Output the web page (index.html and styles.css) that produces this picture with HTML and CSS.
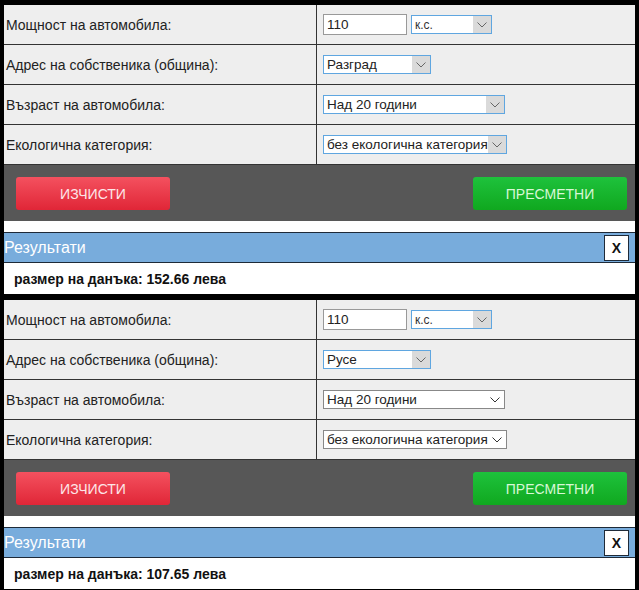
FILE: index.html
```html
<!DOCTYPE html>
<html lang="bg">
<head>
<meta charset="utf-8">
<link rel="stylesheet" href="styles.css">
</head>
<body>
<div class="panel">
  <div class="form">
    <div class="row">
      <div class="lbl">Мощност на автомобила:</div>
      <div class="fld">
        <span class="txt">110</span>
        <span class="sel hot w-unit"><span class="val small">к.с.</span><span class="arr"><svg width="10" height="6" viewBox="0 0 10 6"><path d="M0.5 0.5 L5 5 L9.5 0.5" fill="none" stroke="#666" stroke-width="1"/></svg></span></span>
      </div>
    </div>
    <div class="row">
      <div class="lbl">Адрес на собственика (община):</div>
      <div class="fld">
        <span class="sel hot w-town"><span class="val">Разград</span><span class="arr"><svg width="10" height="6" viewBox="0 0 10 6"><path d="M0.5 0.5 L5 5 L9.5 0.5" fill="none" stroke="#666" stroke-width="1"/></svg></span></span>
      </div>
    </div>
    <div class="row">
      <div class="lbl">Възраст на автомобила:</div>
      <div class="fld">
        <span class="sel hot w-age"><span class="val">Над 20 години</span><span class="arr"><svg width="10" height="6" viewBox="0 0 10 6"><path d="M0.5 0.5 L5 5 L9.5 0.5" fill="none" stroke="#666" stroke-width="1"/></svg></span></span>
      </div>
    </div>
    <div class="row">
      <div class="lbl">Екологична категория:</div>
      <div class="fld">
        <span class="sel hot w-eco"><span class="val">без екологична категория</span><span class="arr"><svg width="10" height="6" viewBox="0 0 10 6"><path d="M0.5 0.5 L5 5 L9.5 0.5" fill="none" stroke="#666" stroke-width="1"/></svg></span></span>
      </div>
    </div>
  </div>
  <div class="bar">
    <span class="btn red">ИЗЧИСТИ</span>
    <span class="btn green">ПРЕСМЕТНИ</span>
  </div>
  <div class="spacer"></div>
  <div class="res-head"><span class="res-title">Результати</span><span class="close">X</span></div>
  <div class="res-body">размер на данъка: 152.66 лева</div>
</div>

<div class="panel">
  <div class="form">
    <div class="row">
      <div class="lbl">Мощност на автомобила:</div>
      <div class="fld">
        <span class="txt">110</span>
        <span class="sel hot w-unit"><span class="val small">к.с.</span><span class="arr"><svg width="10" height="6" viewBox="0 0 10 6"><path d="M0.5 0.5 L5 5 L9.5 0.5" fill="none" stroke="#666" stroke-width="1"/></svg></span></span>
      </div>
    </div>
    <div class="row">
      <div class="lbl">Адрес на собственика (община):</div>
      <div class="fld">
        <span class="sel hot w-town"><span class="val">Русе</span><span class="arr"><svg width="10" height="6" viewBox="0 0 10 6"><path d="M0.5 0.5 L5 5 L9.5 0.5" fill="none" stroke="#666" stroke-width="1"/></svg></span></span>
      </div>
    </div>
    <div class="row">
      <div class="lbl">Възраст на автомобила:</div>
      <div class="fld">
        <span class="sel cold w-age"><span class="val">Над 20 години</span><span class="arr"><svg width="10" height="6" viewBox="0 0 10 6"><path d="M0.5 0.5 L5 5 L9.5 0.5" fill="none" stroke="#333" stroke-width="1"/></svg></span></span>
      </div>
    </div>
    <div class="row">
      <div class="lbl">Екологична категория:</div>
      <div class="fld">
        <span class="sel cold w-eco"><span class="val">без екологична категория</span><span class="arr"><svg width="10" height="6" viewBox="0 0 10 6"><path d="M0.5 0.5 L5 5 L9.5 0.5" fill="none" stroke="#333" stroke-width="1"/></svg></span></span>
      </div>
    </div>
  </div>
  <div class="bar">
    <span class="btn red">ИЗЧИСТИ</span>
    <span class="btn green">ПРЕСМЕТНИ</span>
  </div>
  <div class="spacer"></div>
  <div class="res-head"><span class="res-title">Результати</span><span class="close">X</span></div>
  <div class="res-body">размер на данъка: 107.65 лева</div>
</div>
</body>
</html>
```

FILE: styles.css
```css
html, body {
  margin: 0;
  padding: 0;
  background: #000;
}
body {
  padding: 5px 4px 0 4px;
  font-family: "Liberation Sans", Arial, sans-serif;
  font-size: 14px;
  color: #222;
  display: flex;
  flex-direction: column;
  gap: 6px;
}
.panel {
  width: 631px;
  display: flex;
  flex-direction: column;
}
.form {
  background: #eeeeee;
}
.row {
  display: grid;
  grid-template-columns: 313px 1fr;
  height: 39px;
  border-bottom: 1px solid #333;
}
.lbl {
  display: flex;
  align-items: center;
  padding-left: 2px;
  border-right: 1px solid #333;
}
.fld {
  display: flex;
  align-items: center;
  gap: 4px;
  padding-left: 6px;
}
.txt {
  box-sizing: border-box;
  width: 84px;
  height: 21px;
  background: #fff;
  border: 1px solid #999;
  display: flex;
  align-items: center;
  padding-left: 3px;
  font-size: 13.5px;
}
.sel {
  box-sizing: border-box;
  height: 19px;
  background: #fff;
  display: flex;
  align-items: stretch;
  font-size: 13.5px;
}
.sel.hot { border: 1px solid #5fa6e0; }
.sel.cold { border: 1px solid #888; }
.sel .val {
  flex: 1;
  display: flex;
  align-items: center;
  padding-left: 3px;
  white-space: nowrap;
  overflow: hidden;
}
.sel .val.small { font-size: 12px; color: #333; }
.sel .arr {
  width: 18px;
  display: flex;
  align-items: center;
  justify-content: center;
}
.sel.hot .arr { background: #dadada; }
.w-unit { width: 81px; }
.w-town { width: 108px; }
.w-age { width: 182px; }
.w-eco { width: 184px; }
.bar {
  background: #575757;
  height: 56px;
  display: flex;
  justify-content: space-between;
  align-items: flex-start;
  padding: 12px 8px 0 12px;
  box-sizing: border-box;
}
.btn {
  width: 154px;
  height: 33px;
  border-radius: 3px;
  display: flex;
  align-items: center;
  justify-content: center;
  font-size: 14px;
}
.btn.red {
  background: linear-gradient(#f4515f, #e02637);
  color: #fde6e8;
}
.btn.green {
  background: linear-gradient(#1ec23c, #10a81f);
  color: #d8f8d6;
}
.spacer {
  height: 11px;
  background: #fff;
}
.res-head {
  height: 29px;
  background: #78acdc;
  border-top: 1px solid #1e2a38;
  border-bottom: 1px solid #1e2a38;
  display: flex;
  align-items: center;
  justify-content: space-between;
  padding-right: 6px;
}
.res-title {
  color: #fff;
  font-size: 16px;
}
.close {
  box-sizing: border-box;
  width: 25px;
  height: 26px;
  background: #fff;
  border: 1px solid #1e2a38;
  display: flex;
  align-items: center;
  justify-content: center;
  font-weight: bold;
  font-size: 14px;
  color: #111;
}
.res-body {
  height: 31px;
  background: #fff;
  display: flex;
  align-items: center;
  padding-left: 10px;
  font-weight: bold;
  color: #111;
}
```
